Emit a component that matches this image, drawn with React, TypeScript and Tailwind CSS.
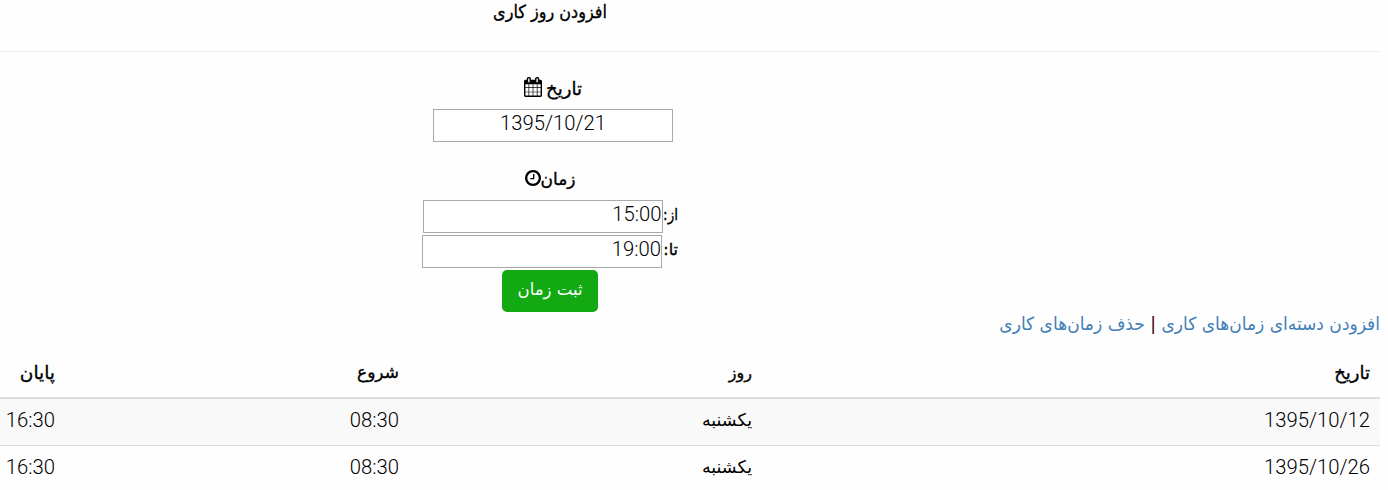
const rows = [
  ["1395/10/12", "یکشنبه", "08:30", "16:30"],
  ["1395/10/26", "یکشنبه", "08:30", "16:30"],
];

const columns = [
  { label: "تاریخ", size: "text-[18px]" },
  { label: "روز", size: "text-[16px]" },
  { label: "شروع", size: "text-[17px]" },
  { label: "پایان", size: "text-[18.5px]" },
];

const strong = "[-webkit-text-stroke:0.35px_currentColor]";
const numeric = "font-['Roboto','DejaVu_Sans',sans-serif] text-[20.25px] font-light";

function CalendarIcon() {
  return (
    <svg className="mt-[-3px] h-[20px] w-[18px] shrink-0" viewBox="0 0 1664 1792" preserveAspectRatio="none" fill="currentColor" aria-hidden="true">
      <path d="M128 1664h288v-288H128v288zm352 0h320v-288H480v288zm-352-352h288V992H128v320zm352 0h320V992H480v320zM128 928h288V640H128v288zm736 736h320v-288H864v288zM480 928h320V640H480v288zm768 736h288v-288h-288v288zm-384-352h320V992H864v320zM512 448V160q0-13-9.500-22.500T480 128h-64q-13 0-22.500 9.500T384 160v288q0 13 9.500 22.500T416 480h64q13 0 22.500-9.500T512 448zm736 864h288V992h-288v320zM864 928h320V640H864v288zm384 0h288V640h-288v288zm32-480V160q0-13-9.500-22.500T1248 128h-64q-13 0-22.500 9.500T1152 160v288q0 13 9.500 22.500t22.500 9.500h64q13 0 22.500-9.500t9.500-22.500zm384-64v1280q0 52-38 90t-90 38H128q-52 0-90-38t-38-90V384q0-52 38-90t90-38h128v-96q0-66 47-113T416 0h64q66 0 113 47t47 113v96h384v-96q0-66 47-113t113-47h64q66 0 113 47t47 113v96h128q52 0 90 38t38 90z" />
    </svg>
  );
}

function ClockIcon() {
  return (
    <svg className="mt-[-2px] size-4 shrink-0" viewBox="128 128 1536 1536" fill="currentColor" aria-hidden="true">
      <path d="M1024 544v448q0 14-9 23t-23 9H672q-14 0-23-9t-9-23v-64q0-14 9-23t23-9h224V544q0-14 9-23t23-9h64q14 0 23 9t9 23zm416 352q0-148-73-273t-198-198-273-73-273 73-198 198-73 273 73 273 198 198 273 73 273-73 198-198 73-273zm224 0q0 209-103 385.500T1281.500 1561 896 1664t-385.500-103T231 1281.500 128 896t103-385.500T510.500 231 896 128t385.500 103T1561 510.500 1664 896z" />
    </svg>
  );
}

export default function App() {
  return (
    <div className="h-[490px] overflow-hidden bg-[#fefefe] font-['DejaVu_Sans',sans-serif] text-[17px] text-black">
      <main dir="rtl" className="w-[1380px]">
        <h1 className={`h-[52px] border-b border-[#eee] pr-[280px] text-[18px] leading-[24px] ${strong}`}>
          <span className="block w-[1100px] scale-x-[0.89] text-center">افزودن روز کاری</span>
        </h1>
        <form className="mr-[280px] flex w-[1100px] flex-col items-center">
          <label className={`mt-[19px] ml-[6px] flex h-[35px] items-center gap-1 text-[18px] leading-[28px] ${strong}`}>
            <span>تاریخ</span>
            <CalendarIcon />
          </label>
          <input dir="ltr" className={`mt-[3px] ml-[6px] h-[33px] w-[240px] border border-[#a9a9a9] bg-white pb-1.5 text-center ${numeric}`} defaultValue="1395/10/21" />
          <label className={`mt-[18px] mb-[3px] flex h-[37px] items-center leading-[28px] ${strong}`}>
            <span>زمان</span>
            <ClockIcon />
          </label>
          <div className="flex h-[35px] w-[255px] items-start justify-between">
            <span className="w-[15px]">
              <span className={`block w-[18px] origin-right scale-x-[0.85] whitespace-nowrap text-[16px] leading-[29px] ${strong}`}>از:</span>
            </span>
            <input dir="ltr" className={`h-[33px] w-[240px] shrink-0 border border-[#a9a9a9] bg-white pb-1.5 text-right ${numeric}`} defaultValue="15:00" />
          </div>
          <div className="flex h-[35px] w-[256px] items-start justify-end">
            <span className={`flex-1 whitespace-nowrap text-[16px] leading-[29px] ${strong}`}>تا:</span>
            <input dir="ltr" className={`h-[33px] w-[240px] shrink-0 border border-[#a9a9a9] bg-white pb-1.5 text-right ${numeric}`} defaultValue="19:00" />
          </div>
          <button type="button" className="h-[42px] w-24 rounded-[5px] bg-[#13a913] pb-px text-[16.5px] text-white">ثبت زمان</button>
        </form>
        <nav className="flex h-[36px] origin-right scale-x-[0.947] items-start whitespace-pre text-[18px] leading-[23px] text-[#437fb6]">
          <a>افزودن دسته‌ای زمان‌های کاری</a>
          <span className="text-[#330000]"> | </span>
          <a>حذف زمان‌های کاری</a>
        </nav>
        <table className="w-full table-fixed border-collapse text-right">
          <colgroup>
            <col className="w-[618px]" />
            <col className="w-[353px]" />
            <col className="w-[344px]" />
            <col className="w-[65px]" />
          </colgroup>
          <thead>
            <tr className="h-[50px] border-b-2 border-[#ddd]">
              {columns.map(({ label, size }) => (
                <th key={label} className={`p-0 pr-[10px] text-right font-normal ${size} ${strong}`}>{label}</th>
              ))}
            </tr>
          </thead>
          <tbody>
            {rows.map((row) => (
              <tr key={row[0]} className="h-[47px] border-b border-[#ddd] odd:bg-[#f9f9f9]">
                {row.map((value, i) => (
                  <td key={i} className={i === 1 ? "p-0 pr-[10px] pb-[3px] text-[17.5px]" : `p-0 pr-[10px] pb-[3px] ${numeric}`}>{value}</td>
                ))}
              </tr>
            ))}
          </tbody>
        </table>
      </main>
    </div>
  );
}
